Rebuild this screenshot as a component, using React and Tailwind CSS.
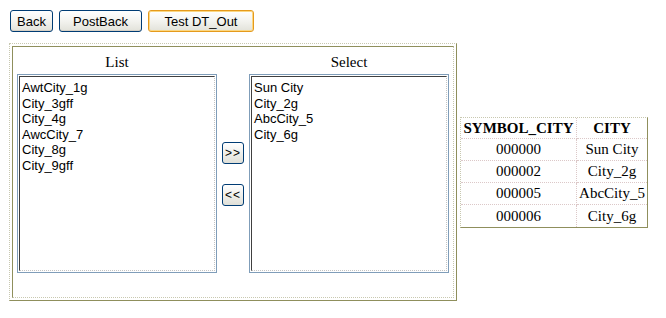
import React from 'react';

const listItems = ['AwtCity_1g', 'City_3gff', 'City_4g', 'AwcCity_7', 'City_8g', 'City_9gff'];
const selectItems = ['Sun City', 'City_2g', 'AbcCity_5', 'City_6g'];
const rows = [
  ['000000', 'Sun City'],
  ['000002', 'City_2g'],
  ['000005', 'AbcCity_5'],
  ['000006', 'City_6g'],
];

const sans = "font-['Liberation_Sans',Arial,sans-serif]";
const serif = "font-['Liberation_Serif','Times_New_Roman',serif]";

// outset = light dotted top/left, olive bottom/right ; inset is the reverse
const outset =
  'border border-solid [border-top-style:dotted] [border-left-style:dotted] border-l-[#c8c8b0] border-t-[#c8c8b0] border-r-[#8f8f5c] border-b-[#8f8f5c]';
const inset =
  'border border-solid [border-right-style:dotted] [border-bottom-style:dotted] border-l-[#8f8f5c] border-t-[#8f8f5c] border-r-[#c8c8b0] border-b-[#c8c8b0]';

// XP style push button
const XpButton = ({ children, width, focused = false }) => (
  <button
    className={`${sans} ${width} h-[22px] text-[13px] leading-none text-black rounded-[3px] border bg-gradient-to-b from-[#ffffff] via-[#f3f3ef] to-[#e2e2da] ${
      focused
        ? 'border-[#e59a1c] shadow-[inset_0_0_0_1px_#fbd783]'
        : 'border-[#003c74] shadow-[inset_0_-1px_0_#d6d0c5]'
    }`}
  >
    {children}
  </button>
);

const SmallButton = ({ children }) => (
  <button
    className={`${sans} w-[22px] h-[22px] text-[12px] leading-none text-black rounded-[3px] border border-[#003c74] bg-gradient-to-b from-[#ffffff] to-[#e0e0d8] tracking-[1px]`}
  >
    {children}
  </button>
);

const ListBox = ({ items }) => (
  <div className="w-[200px] h-[199px] border border-[#7f9db9] p-px bg-white">
    <div className="h-full border-solid [border-right-style:dotted] [border-bottom-style:dotted] border border-l-[#404040] border-t-[#404040] border-r-[#c4c4c4] border-b-[#c4c4c4] px-[2px] pt-[3px]">
      {items.map((item) => (
        <div key={item} className={`${sans} text-[13px] leading-[15.6px] text-black`}>
          {item}
        </div>
      ))}
    </div>
  </div>
);

export default function App() {
  return (
    <div className="w-[666px] h-[318px] bg-white overflow-hidden">
      <div className="flex pl-[10px] pt-[10px] gap-[6px]">
        <XpButton width="w-[43px]">Back</XpButton>
        <XpButton width="w-[83px]">PostBack</XpButton>
        <XpButton width="w-[106px]" focused>
          Test DT_Out
        </XpButton>
      </div>

      <div className="flex items-center ml-[9px] mt-[11px] gap-[3px]">
        {/* outer frame */}
        <div className={`w-[448px] h-[258px] p-[2px] ${outset}`}>
          <div className={`h-full pl-[4px] pt-[4px] ${inset}`}>
            <div className="flex gap-[5px]">
              <div className="flex flex-col">
                <div className={`${serif} text-[15px] leading-[22px] h-[23px] text-center text-black`}>List</div>
                <ListBox items={listItems} />
              </div>
              <div className="flex flex-col justify-center gap-[20px] pt-[23px]">
                <SmallButton>&gt;&gt;</SmallButton>
                <SmallButton>&lt;&lt;</SmallButton>
              </div>
              <div className="flex flex-col">
                <div className={`${serif} text-[15px] leading-[22px] h-[23px] text-center text-black`}>Select</div>
                <ListBox items={selectItems} />
              </div>
            </div>
          </div>
        </div>

        {/* result grid */}
        <table className={`${serif} text-[15px] text-black border-separate border-spacing-0 ${outset}`}>
          <thead>
            <tr className="h-[21px]">
              <th className="w-[116px] px-[1px] font-bold leading-[20px] border-r border-b border-dotted border-[#dcc8c8]">SYMBOL_CITY</th>
              <th className="w-[70px] px-[1px] font-bold leading-[20px] border-b border-dotted border-[#dcc8c8]">CITY</th>
            </tr>
          </thead>
          <tbody>
            {rows.map(([code, city], i) => (
              <tr key={code} className="h-[22px]">
                <td className={`text-center leading-[20px] border-r border-dotted border-[#dcc8c8] ${i < rows.length - 1 ? 'border-b' : ''}`}>
                  {code}
                </td>
                <td className={`text-center leading-[20px] border-dotted border-[#dcc8c8] ${i < rows.length - 1 ? 'border-b' : ''}`}>
                  {city}
                </td>
              </tr>
            ))}
          </tbody>
        </table>
      </div>
    </div>
  );
}
